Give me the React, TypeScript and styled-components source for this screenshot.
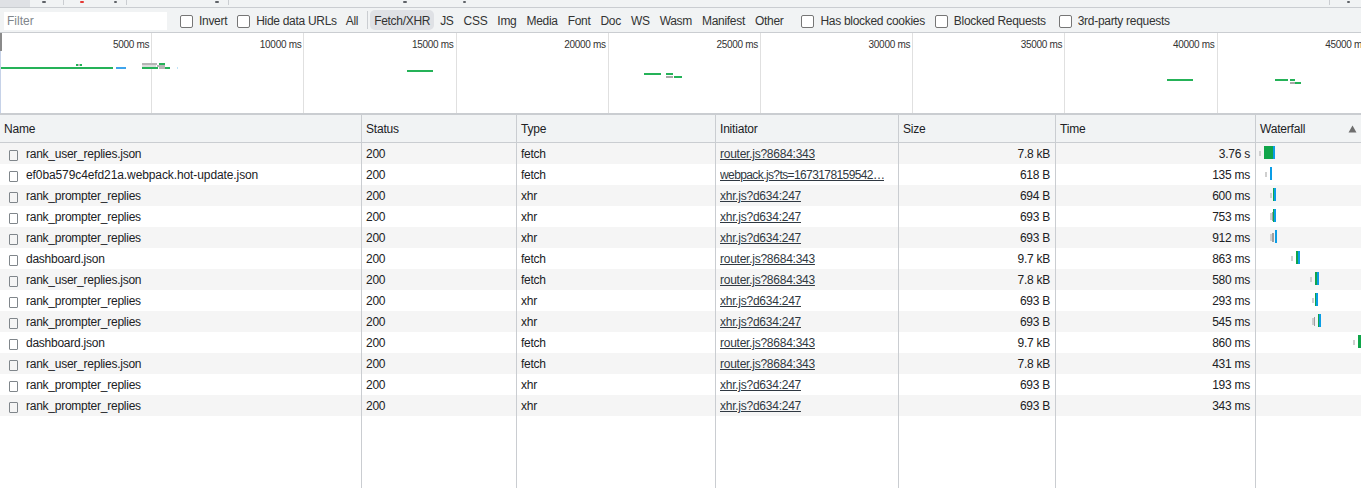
import React from "react";
import styled, { createGlobalStyle } from "styled-components";

const GlobalStyle = createGlobalStyle`
  html, body { margin: 0; padding: 0; background: #fff; }
  body {
    font-family: "Liberation Sans", Arial, sans-serif;
    font-size: 12px;
    color: #202124;
    overflow: hidden;
  }
  * { box-sizing: border-box; }
`;

const COLS = "362px 155px 199px 183px 157px 200px 1fr";
const GREEN = "#10a54a";
const BLUE = "#0a9de6";
const OV_GREEN = "#25b258";
const OV_BLUE = "#3ea4ec";

const Page = styled.div`
  width: 1361px;
  height: 488px;
  display: flex;
  flex-direction: column;
  overflow: hidden;
`;

/* ---------- cut-off strip at the very top ---------- */
const TopStrip = styled.div`
  height: 8px;
  flex-shrink: 0;
  background: #f1f3f4;
  border-bottom: 1px solid #cacdd1;
  display: flex;
  align-items: flex-start;
`;
const StripTab = styled.div`
  width: 30px;
  height: 7px;
  background: #dfe1e5;
`;
const StripSep = styled.div<{ $ml: number }>`
  margin-left: ${(p) => p.$ml}px;
  width: 1px;
  height: 5px;
  background: #cacdd1;
`;
const StripMark = styled.div<{ $ml: number; $c?: string; $w?: number }>`
  margin-left: ${(p) => p.$ml}px;
  margin-top: 1px;
  width: ${(p) => p.$w ?? 3}px;
  height: 2px;
  border-radius: 1px;
  background: ${(p) => p.$c ?? "#5f6368"};
`;
const StripSpacer = styled.div`
  flex: 1;
`;

/* ---------- filter bar ---------- */
const FilterBar = styled.div`
  height: 25px;
  flex-shrink: 0;
  background: #f1f3f4;
  border-bottom: 1px solid #cacdd1;
  display: flex;
  align-items: center;
  padding: 2px 0 0 4px;
  color: #333;
  white-space: nowrap;
`;
const FilterInput = styled.input`
  width: 163px;
  height: 18px;
  margin-top: -1px;
  border: none;
  outline: none;
  background: #fff;
  padding: 1px 3px 0;
  font-family: inherit;
  font-size: 12px;
  color: #202124;
  &::placeholder { color: #80868b; }
`;
const CheckItem = styled.label<{ $ml: number }>`
  margin-left: ${(p) => p.$ml}px;
  display: flex;
  align-items: center;
  letter-spacing: -0.3px;
`;
const Box = styled.span`
  width: 13px;
  height: 13px;
  border: 1px solid #767676;
  border-radius: 2px;
  background: #fff;
  margin-right: 6px;
  flex-shrink: 0;
`;
const TypeButton = styled.span<{ $active?: boolean; $ml?: number }>`
  margin-left: ${(p) => p.$ml ?? 2}px;
  height: 20px;
  margin-top: -2px;
  padding: 2px 4px 0;
  display: flex;
  align-items: center;
  border-radius: 5px;
  letter-spacing: -0.3px;
  background: ${(p) => (p.$active ? "#dfe1e5" : "transparent")};
`;
const BarSep = styled.span`
  margin-left: 5px;
  margin-top: -2px;
  width: 1px;
  height: 18px;
  background: #cacdd1;
`;

/* ---------- overview ---------- */
const Overview = styled.div`
  position: relative;
  height: 82px;
  flex-shrink: 0;
  border-bottom: 2px solid #cacdd1;
  display: flex;
  overflow: hidden;
`;
const Tick = styled.div`
  flex: 0 0 152.2px;
  border-right: 1px solid #e0e0e0;
  text-align: right;
  padding: 6px 2px 0 0;
  font-size: 10px;
  line-height: 12px;
  color: #333;
  white-space: nowrap;
  letter-spacing: -0.3px;
`;
const OverviewChart = styled.svg`
  position: absolute;
  left: 0;
  top: 0;
`;
const WindowHandle = styled.div`
  position: absolute;
  left: 0;
  top: 0;
  width: 2px;
  height: 18px;
  background: #8a8a8a;
`;
const WindowEdge = styled.div`
  position: absolute;
  left: 0;
  top: 18px;
  bottom: 0;
  width: 1px;
  background: #c6d2e8;
`;

/* ---------- table ---------- */
const HeaderRow = styled.div`
  display: grid;
  grid-template-columns: ${COLS};
  height: 28px;
  flex-shrink: 0;
  background: #f1f3f4;
  border-bottom: 1px solid #cacdd1;
`;
const HeaderCell = styled.div`
  border-right: 1px solid #cacdd1;
  padding: 0 4px;
  display: flex;
  align-items: center;
  justify-content: space-between;
  letter-spacing: -0.2px;
  color: #202124;
  &:last-child { border-right: none; }
`;
const Body = styled.div`
  flex: 1;
  display: flex;
  flex-direction: column;
`;
const Row = styled.div<{ $striped?: boolean }>`
  display: grid;
  grid-template-columns: ${COLS};
  height: 21px;
  flex-shrink: 0;
  background: ${(p) => (p.$striped ? "#f5f5f5" : "#fff")};
`;
const FillerRow = styled.div`
  display: grid;
  grid-template-columns: ${COLS};
  flex: 1;
`;
const Cell = styled.div<{ $right?: boolean }>`
  border-right: 1px solid #cacdd1;
  padding: 0 ${(p) => (p.$right ? "5px" : "4px")} 2px 4px;
  display: flex;
  align-items: center;
  justify-content: ${(p) => (p.$right ? "flex-end" : "flex-start")};
  overflow: hidden;
  white-space: nowrap;
  letter-spacing: -0.25px;
  color: #202124;
  &:last-child { border-right: none; }
`;
const NameCell = styled(Cell)`
  padding-left: 9px;
`;
const FileIcon = styled.span`
  width: 9px;
  height: 11px;
  margin-top: 2px;
  border: 1px solid #80868b;
  border-radius: 1px;
  margin-right: 8px;
  flex-shrink: 0;
`;
const NameText = styled.span<{ $wide?: boolean }>`
  letter-spacing: ${(p) => (p.$wide ? "-0.1px" : "-0.25px")};
`;
const LinkText = styled.span<{ $tight?: boolean }>`
  text-decoration: underline;
  overflow: hidden;
  text-overflow: clip;
  letter-spacing: ${(p) => (p.$tight ? "-0.6px" : "-0.25px")};
  color: #303942;
`;
const WaterfallCell = styled.div`
  padding: 0;
`;

type Seg = [number, number, string, number?, number?];

interface Req {
  name: string;
  type: string;
  initiator: string;
  size: string;
  time: string;
  bars: Seg[];
}

const LQ = "#cfcfcf";
const DQ = "#9e9e9e";

const requests: Req[] = [
  { name: "rank_user_replies.json", type: "fetch", initiator: "router.js?8684:343", size: "7.8 kB", time: "3.76 s",
    bars: [[3, 2, LQ, 8, 5], [8, 9, GREEN], [17, 2, BLUE]] },
  { name: "ef0ba579c4efd21a.webpack.hot-update.json", type: "fetch", initiator: "webpack.js?ts=1673178159542…", size: "618 B", time: "135 ms",
    bars: [[9, 2, LQ, 8, 5], [14, 2, BLUE]] },
  { name: "rank_prompter_replies", type: "xhr", initiator: "xhr.js?d634:247", size: "694 B", time: "600 ms",
    bars: [[14, 2, LQ, 8, 5], [17, 1, GREEN], [18, 2, BLUE]] },
  { name: "rank_prompter_replies", type: "xhr", initiator: "xhr.js?d634:247", size: "693 B", time: "753 ms",
    bars: [[14, 2, LQ, 7, 7], [16, 1, DQ, 6, 9], [17, 1, GREEN], [18, 2, BLUE]] },
  { name: "rank_prompter_replies", type: "xhr", initiator: "xhr.js?d634:247", size: "693 B", time: "912 ms",
    bars: [[14, 2, LQ, 7, 7], [16, 2, DQ, 6, 9], [19, 2, BLUE]] },
  { name: "dashboard.json", type: "fetch", initiator: "router.js?8684:343", size: "9.7 kB", time: "863 ms",
    bars: [[35, 2, LQ, 8, 5], [40, 2, GREEN], [42, 2, BLUE]] },
  { name: "rank_user_replies.json", type: "fetch", initiator: "router.js?8684:343", size: "7.8 kB", time: "580 ms",
    bars: [[54, 2, LQ, 8, 5], [59, 2, GREEN], [61, 2, BLUE]] },
  { name: "rank_prompter_replies", type: "xhr", initiator: "xhr.js?d634:247", size: "693 B", time: "293 ms",
    bars: [[56, 2, LQ, 8, 5], [59, 1, GREEN], [60, 2, BLUE]] },
  { name: "rank_prompter_replies", type: "xhr", initiator: "xhr.js?d634:247", size: "693 B", time: "545 ms",
    bars: [[56, 2, LQ, 7, 7], [58, 1, DQ, 6, 9], [62, 1, GREEN], [63, 2, BLUE]] },
  { name: "dashboard.json", type: "fetch", initiator: "router.js?8684:343", size: "9.7 kB", time: "860 ms",
    bars: [[97, 2, LQ, 8, 5], [102, 3, GREEN]] },
  { name: "rank_user_replies.json", type: "fetch", initiator: "router.js?8684:343", size: "7.8 kB", time: "431 ms", bars: [] },
  { name: "rank_prompter_replies", type: "xhr", initiator: "xhr.js?d634:247", size: "693 B", time: "193 ms", bars: [] },
  { name: "rank_prompter_replies", type: "xhr", initiator: "xhr.js?d634:247", size: "693 B", time: "343 ms", bars: [] },
];

const ticks = [5000, 10000, 15000, 20000, 25000, 30000, 35000, 40000, 45000];

type OvSeg = [number, number, number, string];
const overviewBars: OvSeg[] = [
  [0, 34, 113, OV_GREEN],
  [116, 34, 10, OV_BLUE],
  [76, 31, 2, OV_GREEN],
  [78, 31, 2, "#bdbdbd"],
  [80, 31, 2, OV_GREEN],
  [142, 30, 15, "#b5b5b5"],
  [159, 30, 6, OV_GREEN],
  [142, 32, 14, "#dcdcdc"],
  [157, 32, 8, "#b5b5b5"],
  [142, 34, 16, OV_GREEN],
  [159, 34, 6, "#b5b5b5"],
  [165, 34, 5, OV_GREEN],
  [177, 34, 1, "#bfe3f8"],
  [407, 37, 26, OV_GREEN],
  [644, 40, 17, OV_GREEN],
  [666, 40, 7, OV_GREEN],
  [666, 43, 7, "#a8a8a8"],
  [674, 43, 8, OV_GREEN],
  [1167, 46, 26, OV_GREEN],
  [1275, 46, 13, OV_GREEN],
  [1290, 46, 5, OV_GREEN],
  [1290, 49, 5, "#a8a8a8"],
  [1295, 49, 6, OV_GREEN],
];

const typeFilters = ["JS", "CSS", "Img", "Media", "Font", "Doc", "WS", "Wasm", "Manifest", "Other"];

function Waterfall({ bars }: { bars: Seg[] }) {
  return (
    <svg width="105" height="21" viewBox="0 0 105 21">
      {bars.map(([x, w, c, y, h], i) => (
        <rect key={i} x={x} y={y ?? 3} width={w} height={h ?? 13} fill={c} />
      ))}
    </svg>
  );
}

function SortArrow() {
  return (
    <svg width="9" height="8" viewBox="0 0 9 8">
      <polygon points="4.5,0.5 8.5,7.5 0.5,7.5" fill="#6e6e6e" />
    </svg>
  );
}

export default function App() {
  return (
    <>
      <GlobalStyle />
      <Page>
        <TopStrip>
          <StripTab />
          <StripMark $ml={12} $w={4} />
          <StripSep $ml={17} />
          <StripMark $ml={16} $c="#e53935" $w={4} />
          <StripMark $ml={30} $w={3} />
          <StripSep $ml={9} />
          <StripMark $ml={88} $w={4} />
          <StripSep $ml={9} />
          <StripMark $ml={174} $w={4} />
          <StripMark $ml={56} $w={3} />
          <StripSpacer />
          <StripSep $ml={0} />
          <StripMark $ml={17} $w={3} />
          <StripMark $ml={11} $w={0} />
        </TopStrip>

        <FilterBar>
          <FilterInput placeholder="Filter" />
          <CheckItem $ml={13}><Box />Invert</CheckItem>
          <CheckItem $ml={10}><Box />Hide data URLs</CheckItem>
          <TypeButton $ml={5}>All</TypeButton>
          <BarSep />
          <TypeButton $active $ml={2}>Fetch/XHR</TypeButton>
          {typeFilters.map((t) => (
            <TypeButton key={t}>{t}</TypeButton>
          ))}
          <CheckItem $ml={14}><Box />Has blocked cookies</CheckItem>
          <CheckItem $ml={10}><Box />Blocked Requests</CheckItem>
          <CheckItem $ml={13}><Box />3rd-party requests</CheckItem>
        </FilterBar>

        <Overview>
          {ticks.map((t) => (
            <Tick key={t}>{t} ms</Tick>
          ))}
          <OverviewChart width="1361" height="80" viewBox="0 0 1361 80">
            {overviewBars.map(([x, y, w, c], i) => (
              <rect key={i} x={x} y={y} width={w} height={2} fill={c} />
            ))}
          </OverviewChart>
          <WindowHandle />
          <WindowEdge />
        </Overview>

        <HeaderRow>
          <HeaderCell>Name</HeaderCell>
          <HeaderCell>Status</HeaderCell>
          <HeaderCell>Type</HeaderCell>
          <HeaderCell>Initiator</HeaderCell>
          <HeaderCell>Size</HeaderCell>
          <HeaderCell>Time</HeaderCell>
          <HeaderCell>
            Waterfall
            <SortArrow />
          </HeaderCell>
        </HeaderRow>

        <Body>
          {requests.map((r, i) => (
            <Row key={i} $striped={i % 2 === 0}>
              <NameCell>
                <FileIcon />
                <NameText $wide={r.name.length > 30}>{r.name}</NameText>
              </NameCell>
              <Cell>200</Cell>
              <Cell>{r.type}</Cell>
              <Cell>
                <LinkText $tight={r.initiator.length > 20}>{r.initiator}</LinkText>
              </Cell>
              <Cell $right>{r.size}</Cell>
              <Cell $right>{r.time}</Cell>
              <WaterfallCell>
                <Waterfall bars={r.bars} />
              </WaterfallCell>
            </Row>
          ))}
          <FillerRow>
            <Cell />
            <Cell />
            <Cell />
            <Cell />
            <Cell />
            <Cell />
            <WaterfallCell />
          </FillerRow>
        </Body>
      </Page>
    </>
  );
}
